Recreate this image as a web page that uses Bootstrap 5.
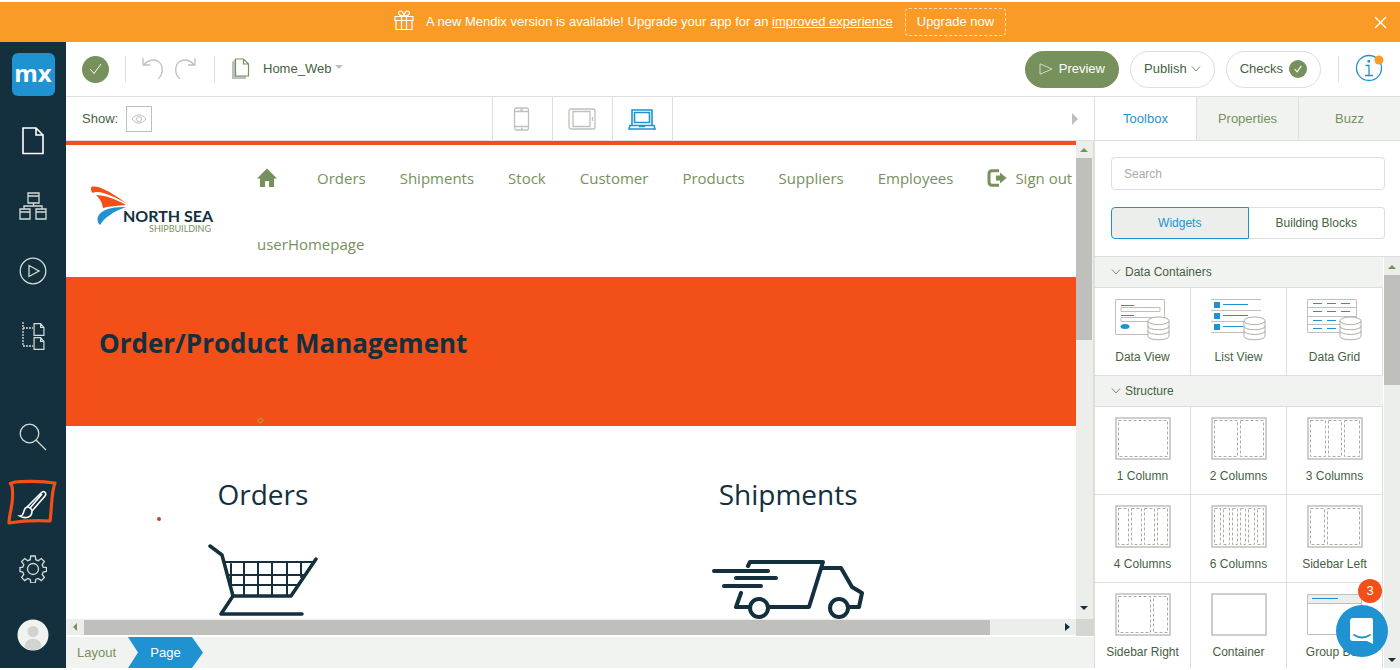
<!DOCTYPE html>
<html lang="en">
<head>
<meta charset="utf-8">
<meta name="viewport" content="width=device-width, initial-scale=1">
<title>Home_Web</title>
<link href="https://cdn.jsdelivr.net/npm/bootstrap@5.3.0/dist/css/bootstrap.min.css" rel="stylesheet">
<style>
:root{--navy:#142f3e;--blue:#1f93d1;--amber:#f99b26;--red:#f24f19;--green:#76915b;--ink:#465f42;--line:#dcdfda;--soft:#f1f3f0;--grey:#bfc0bb}
body{font-family:"Liberation Sans",Arial,sans-serif;font-size:13px;line-height:20px;color:var(--ink);background:#fff}
button{font:inherit;color:inherit;background:none;border:0;padding:0}
svg{display:block;flex:none}
.app{height:100vh;padding:2px 0}
.fill{flex:1 1 0;min-width:0;min-height:0}
.banner{background:var(--amber);height:40px;color:#fff}
.banner a{color:#fff}
.btn-upgrade{border:1px dashed #fde0b8;border-radius:4px;height:28px;padding:0 11px;margin-left:12px;color:#fff}
.btn-close-x{position:absolute;right:13px;top:14px}
.rail{width:66px;background:var(--navy)}
.rail button,.rail a{height:65px;width:66px;display:flex;align-items:center;justify-content:center}
.rail .low,.rail a{height:66px}
.rail a{padding-bottom:2px}
.mx-logo{width:43px;height:43px;border-radius:6px;background:var(--blue);color:#fff;font:700 24px/39px "Open Sans",sans-serif;text-align:center}
.topbar{height:55px;border-bottom:1px solid var(--line)}
.sep{width:1px;height:26px;background:var(--line)}
.actions{gap:11px}
.actions .sep{margin:0 5px 0 6px}
.pill{height:37px;border-radius:19px;border:1px solid var(--line);padding:0 13px;gap:6px}
.pill-main{background:var(--green);border-color:var(--green);color:#fff}
.dot-ok{border-radius:50%;background:var(--green);display:flex;align-items:center;justify-content:center}
.dot-ok.big{width:27px;height:27px}
.dot-ok.tiny{width:18px;height:18px}
.showbar{height:44px;border-bottom:1px solid var(--line)}
.eye{width:26px;height:26px;border:1px solid var(--grey)}
.devices{padding-right:60px}
.device{width:60px;border-left:1px solid var(--line);height:100%;display:flex;align-items:center;justify-content:center}
.device:last-child{border-right:1px solid var(--line);width:61px}
.view{border-top:4px solid var(--red);overflow:hidden;position:relative;font-family:"Open Sans",sans-serif}
.brandbox{width:191px;padding:39px 0 0 24px}
.nav-site{list-style:none;margin:0;padding:0;gap:0 34px;flex-wrap:wrap}
.nav-site a{color:var(--green);text-decoration:none;font-size:15px;line-height:66px;height:66px;display:flex;align-items:center;white-space:nowrap}
.hero{background:var(--red);height:149px;padding-left:33px}
.hero h1{font-size:26px;font-weight:700;line-height:36px;color:var(--navy);margin:0 0 18px}
.duo{margin-top:48px}
.duo section{display:flex;flex-direction:column;align-items:center;flex:none;width:39%}
.duo section+section{width:65%}
.duo h2{font-size:28px;line-height:40px;font-weight:400;color:var(--navy);margin:0 0 25px}
.mark-dot{position:absolute;width:4px;height:4px;border-radius:50%;background:#c04030;left:91px;top:372px}
.mark-gem{position:absolute;width:5px;height:5px;border:1px solid #b89a20;transform:rotate(45deg);left:192px;top:273px}
.vbar{width:18px;background:#ebeeea;border-right:1px solid var(--line)}
.vbar i{display:block;background:var(--grey);width:16px;flex:0 1 182px}
.hbar{height:18px;background:#ebeeea;border-bottom:2px solid #fff}
.hbar i{display:block;background:var(--grey);height:15px;flex:0 1 906px}
.corner{width:18px;background:#d4d7d1;height:17px}
.crumbs{height:31px;background:var(--soft)}
.crumbs a{color:var(--green);text-decoration:none;line-height:32px;height:31px}
.crumbs .first{width:62px;padding-left:11px}
.crumbs .now{background:var(--blue);color:#fff;width:75px;text-align:center;clip-path:polygon(0 0,64px 0,100% 50%,64px 100%,0 100%,10px 50%)}
.side{width:306px;border-left:1px solid var(--line)}
.tabs3{height:44px;border-bottom:1px solid var(--line)}
.tabs3 button{flex:1 1 0;background:var(--soft);color:var(--green);border-left:1px solid var(--line)}
.tabs3 .on{background:#fff;color:var(--blue);border-left:0}
.finder{padding:16px 15px 17px 16px;font-size:12px;border-bottom:1px solid var(--line)}
.finder input{width:100%;height:33px;border:1px solid var(--line);border-radius:4px;padding:0 12px;margin-bottom:17px;display:block;color:var(--ink)}
.finder input::placeholder{color:#a9aca6;opacity:1}
.finder .half{flex:1 1 0;height:32px;border:1px solid var(--line);border-radius:0 4px 4px 0;border-left:0}
.finder .half.on{border:1px solid var(--blue);border-radius:4px 0 0 4px;background:#ebeeea;color:var(--blue)}
.group{height:31px;background:var(--soft);font-size:12px;padding-left:16px;border-bottom:1px solid var(--line);width:100%}
.tiles{display:grid;grid-template-columns:repeat(3,1fr)}
.tiles button{height:88px;border-right:1px solid var(--line);border-bottom:1px solid var(--line);font-size:12px;line-height:16px;display:flex;flex-direction:column;align-items:center;padding-top:10px;gap:8px}
.pvbar{width:17px;background:#ebeeea;border-left:1px solid #fff}
.pvbar i{display:block;background:var(--grey);width:16px;height:110px}
.chat{position:absolute;right:12px;bottom:11px;width:52px;height:52px;border-radius:50%;background:var(--blue);display:flex;align-items:center;justify-content:center}
.count{position:absolute;right:6px;top:-26px;width:24px;height:24px;border-radius:50%;background:var(--red);color:#fff;line-height:24px;text-align:center}
.ln{fill:none;stroke:#bfc0bb}
.ds{fill:none;stroke:#a8aea2;stroke-dasharray:3 2}
.wt{fill:none;stroke:#d5dcd6;stroke-width:1.3}
.nv{fill:none;stroke:#142f3e;stroke-linecap:round;stroke-linejoin:round}
</style>
</head>
<body>
<svg width="0" height="0" class="position-absolute" aria-hidden="true">
<symbol id="drum" viewBox="0 0 24 26"><path d="M1 5v16c0 5 22 5 22 0V5" fill="#fff" stroke="#a8aca2"/><ellipse cx="12" cy="5" rx="11" ry="4" fill="#fff" stroke="#a8aca2"/><path fill="none" stroke="#a8aca2" d="M1 10.500c0 5 22 5 22 0M1 15.500c0 5 22 5 22 0"/></symbol>
<symbol id="leaf" viewBox="0 0 12 14"><path d="M.7.700h7l3.600 4v8.600H.7zM7.700.700v4h3.600" fill="none" stroke="#d5dcd6" stroke-width="1.300"/></symbol>
</svg>
<div class="app d-flex flex-column overflow-hidden">
  <div class="banner d-flex align-items-center justify-content-center position-relative flex-shrink-0">
    <svg width="20" height="21" viewBox="0 0 20 21" fill="none" stroke="#fff" stroke-width="1.200" class="me-2 mb-1"><path d="M1 6.500h18v4H1zM2 10.500v9h16v-9M7.500 6.500v13M12.500 6.500v13M10 6C3 6 4 1 6.500 1S10 6 10 6s1-5 3.500-5S17 6 10 6"/></svg>
    <span class="ms-1">A new Mendix version is available! Upgrade your app for an <a href="#">improved experience</a></span>
    <button type="button" class="btn-upgrade">Upgrade now</button>
    <button type="button" class="btn-close-x" aria-label="Close"><svg width="13" height="13" viewBox="0 0 13 13" stroke="#fff" stroke-width="1.300"><path d="M1 1l11 11M12 1L1 12"/></svg></button>
  </div>

  <div class="d-flex fill">
    <nav class="rail d-flex flex-column flex-shrink-0" aria-label="Main">
      <a href="#" class="text-decoration-none"><span class="mx-logo">mx</span></a>
      <button type="button" aria-label="Pages"><svg width="22" height="28" viewBox="0 0 22 28" fill="none" stroke="#fff" stroke-width="1.600"><path d="M1 1h13l7 7v18.500H1zM14 1v7h7"/></svg></button>
      <button type="button" aria-label="Domain model"><svg class="wt" width="28" height="28" viewBox="0 0 28 28"><path d="M9 1h11v10H9zM9 4h11M1 17h10v10H1zM1 20h10M17 17h10v10H17zM17 20h10M14.500 11v3M5 17v-3h18v3"/></svg></button>
      <button type="button" aria-label="Microflows"><svg class="wt" width="28" height="28" viewBox="0 0 28 28"><circle cx="14" cy="14" r="12.800"/><path d="M10 8.500v11l10-5.500z"/></svg></button>
      <button type="button" aria-label="Navigation"><svg width="24" height="28" viewBox="0 0 24 28"><path class="wt" stroke-dasharray="2 1" d="M2 0v24h10M2 6h10"/><use href="#leaf" x="12" y="1" width="12" height="13"/><use href="#leaf" x="12" y="15" width="12" height="13"/></svg></button>
      <button type="button" class="low mt-auto" aria-label="Search"><svg class="wt" width="28" height="28" viewBox="0 0 28 28"><circle cx="10.500" cy="10.500" r="9.300"/><path d="M17 17l10 10"/></svg></button>
      <button type="button" class="low" aria-label="Theme"><svg width="52" height="48" viewBox="0 0 52 48" fill="none"><path d="M4 4c2 5 2 12 1 20C4 32 2 38 2 44c6-1 20-3 41-2 2-13 1-28 5-38C34 2 16 2 8 3L2 5" stroke="#f24f19" stroke-width="3.200" stroke-linejoin="round"/><g stroke="#fff" stroke-width="1.600"><path d="M20 28L34 14c3-3 6 0 4 3L25 32M35 15L23 29"/><path d="M25 32c0 7-7 8-12 5 3 0 3-2 4-5 1-4 4-5 6-3 1 1 2 1 2 3z"/></g></svg></button>
      <button type="button" class="low" aria-label="Settings"><svg class="wt" width="28" height="28" viewBox="0 0 28 28"><circle cx="14" cy="14" r="5.500"/><path d="M11.800 1h4.400l.6 3.700 2.400 1 3.100-2.200 3.100 3.100-2.200 3.100 1 2.400 3.300.500v3.800l-3.300.600-1 2.400 2.200 3.100-3.100 3.100-3.100-2.200-2.400 1-.6 3.600h-4.400l-.6-3.600-2.400-1-3.100 2.200-3.100-3.100 2.200-3.100-1-2.400L1 16.400v-3.800l2.800-.5 1-2.400-2.200-3.100 3.100-3.100 3.100 2.200 2.400-1z"/></svg></button>
      <button type="button" class="low" aria-label="Account"><svg width="32" height="32" viewBox="0 0 32 32"><circle cx="16" cy="16" r="15.500" fill="#f1f3f0"/><circle cx="16" cy="12.500" r="5.500" fill="#d0d3ce"/><path d="M7.500 28c0-11 17-11 17 0-5 4-12 4-17 0z" fill="#d0d3ce"/></svg></button>
    </nav>

    <div class="fill d-flex flex-column">
      <header class="topbar d-flex align-items-center flex-shrink-0">
        <span class="dot-ok big ms-3"><svg width="13" height="12" viewBox="0 0 13 12" fill="none" stroke="#fff"><path d="M1 6l4 4.500L12 1"/></svg></span>
        <span class="sep mx-3"></span>
        <button type="button" aria-label="Undo"><svg width="22" height="24" viewBox="0 0 22 24" class="ln" stroke-width="1.300"><path d="M1 1v7h7M1.500 8C7 2 13 2 17 5s5 12-1 17"/></svg></button>
        <button type="button" class="ms-2 me-3" aria-label="Redo"><svg width="26" height="24" viewBox="0 0 22 24" class="ln" stroke-width="1.300"><path d="M21 1v7h-7M20.500 8C15 2 9 2 5 5s-5 12 1 17"/></svg></button>
        <span class="sep me-3"></span>
        <button type="button" class="d-flex align-items-center">
          <svg width="20" height="22" viewBox="0 0 20 22" class="me-1"><path d="M1 4l3-3v17h11v3H1z" fill="#bfc0bb"/><path d="M4.500 1h8l5 5v12h-13zM12.500 1v5h5" fill="#fff" stroke="#76915b" stroke-width="1.200"/></svg>
          <span class="ms-2">Home_Web</span>
          <svg width="8" height="4" viewBox="0 0 8 4" class="ms-1 mb-1"><path d="M0 0h8L4 4z" fill="#bfc0bb"/></svg>
        </button>
        <div class="actions d-flex align-items-center ms-auto">
          <button type="button" class="pill pill-main d-flex align-items-center"><svg width="14" height="12" viewBox="0 0 14 12" fill="none" stroke="#cfdac4"><path d="M1 .8v10.400L13 6z"/></svg><span>Preview</span></button>
          <button type="button" class="pill d-flex align-items-center gap-1"><span>Publish</span><svg width="10" height="6" viewBox="0 0 10 6" fill="none" stroke="#76915b"><path d="M1 .5l4 4.500L9 .5"/></svg></button>
          <button type="button" class="pill d-flex align-items-center"><span>Checks</span><span class="dot-ok tiny"><svg width="8" height="8" viewBox="0 0 13 12" fill="none" stroke="#fff" stroke-width="1.800"><path d="M1 6l4 4.500L12 1"/></svg></span></button>
          <span class="sep"></span>
          <button type="button" aria-label="Information" class="me-3"><svg width="29" height="30" viewBox="0 0 29 30"><circle cx="14" cy="14" r="12.500" fill="none" stroke="#1f93d1" stroke-width="1.300"/><path d="M10.500 11.500H14V21M10 21.500h8" fill="none" stroke="#1f93d1" stroke-width="1.300"/><path d="M12.500 6h2.500v2.500h-2.500z" fill="#1f93d1"/><circle cx="24" cy="6" r="4.500" fill="#f99b26"/></svg></button>
        </div>
      </header>

      <div class="d-flex fill">
        <main class="fill d-flex flex-column">
          <div class="showbar d-flex align-items-center flex-shrink-0">
            <span class="ms-3 me-2">Show:</span>
            <button type="button" class="eye d-flex align-items-center justify-content-center" aria-label="Visibility"><svg width="16" height="10" viewBox="0 0 16 10" class="ln"><path d="M1 5c4-5.500 10-5.500 14 0-4 5.500-10 5.500-14 0z"/><circle cx="8" cy="5" r="2.500"/></svg></button>
            <div class="devices d-flex h-100 mx-auto">
              <button type="button" class="device" aria-label="Phone"><svg width="18" height="24" viewBox="0 0 18 24" class="ln" stroke-width="1.300"><rect x="1.500" y="1" width="14" height="22" rx="2"/><path d="M1.500 4.500h14M1.500 19.500h14M7 2.800h3M8 21.500h1.500"/></svg></button>
              <button type="button" class="device" aria-label="Tablet"><svg width="28" height="22" viewBox="0 0 28 22" class="ln" stroke-width="1.300"><rect x="1" y="1" width="26" height="20" rx="2"/><path d="M5 3.500h17v15H5zM24.500 9v4"/></svg></button>
              <button type="button" class="device" aria-label="Desktop"><svg width="28" height="22" viewBox="0 0 28 22" fill="none" stroke="#1f93d1" stroke-width="1.600"><path d="M4 17V2h20v15M6.500 4.500h15v10h-15zM2 17.500h24l1 3.500H1zM11 18.500h6"/></svg></button>
            </div>
            <svg width="6" height="12" viewBox="0 0 6 12" class="me-3"><path d="M0 0l6 6-6 6z" fill="#bfc0bb"/></svg>
          </div>

          <div class="fill d-flex">
            <div class="view fill">
              <div class="d-flex">
                <div class="brandbox flex-shrink-0">
                  <svg width="124" height="52" viewBox="0 0 124 52" role="img" aria-label="North Sea Shipbuilding"><path d="M1 4c0-2 6-2 12 1 8 3 16 9 24 15C27 14 17 9 8 8c-3 0-4 0-5 1C1 8 1 6 1 4z" fill="#f24f19"/><path d="M6 11c8 0 20 4 30 10-9 1-16 1-23 3-1-6-3-9-7-13z" fill="#f24f19"/><path d="M10 41C4 35 8 22 36 23 24 27 14 34 10 41z" fill="#1f93d1"/><text x="33" y="38" font-family="Lato,sans-serif" font-weight="700" font-size="16" fill="#142f3e">NORTH SEA</text><text x="59" y="48" font-family="Lato,sans-serif" font-size="9" fill="#76915b">SHIPBUILDING</text></svg>
                </div>
                <ul class="nav-site d-flex fill">
                  <li><a href="#" aria-label="Home"><svg width="26" height="20" viewBox="0 0 26 20"><path d="M10 .5L0 10.500h3V19h5v-6h4v6h5v-8.500h3z" fill="#76915b"/></svg></a></li>
                  <li><a href="#">Orders</a></li>
                  <li><a href="#">Shipments</a></li>
                  <li><a href="#">Stock</a></li>
                  <li><a href="#">Customer</a></li>
                  <li><a href="#">Products</a></li>
                  <li><a href="#">Suppliers</a></li>
                  <li><a href="#">Employees</a></li>
                  <li><a href="#"><svg width="20" height="18" viewBox="0 0 20 18" class="me-2"><path d="M12 1.800H5C3 1.800 2 3 2 5v8c0 2 1 3.200 3 3.200h7" fill="none" stroke="#76915b" stroke-width="3"/><path d="M9 6.500h4V3.500l6.500 5.500-6.500 5.500v-3H9z" fill="#76915b"/></svg>Sign out</a></li>
                  <li><a href="#">userHomepage</a></li>
                </ul>
              </div>
              <div class="hero d-flex align-items-center"><h1>Order/Product Management</h1></div>
              <div class="duo d-flex">
                <section><h2>Orders</h2>
                  <svg width="112" height="80" viewBox="0 0 112 80" class="nv"><path d="M3 7l12 9 11 41h58l25-37M26 57L14 75h81" stroke-width="3.500"/><path d="M17 23h89M20 36h76M23 46h67M24 25v20M37 23v33M51 23v33M65 23v33M80 23v33M94 23v15" stroke-width="2"/></svg>
                </section>
                <section><h2>Shipments</h2>
                  <svg width="154" height="80" viewBox="0 0 154 80" class="nv" stroke-width="4"><path d="M37 27l2-4h73l-14 45H58M112 29h18l11 19 10 6-3 14h-10M30 54l-5 14h12M3 32h54M25 39h40M13 47h37"/><circle cx="48" cy="69" r="9"/><circle cx="128" cy="69" r="9"/></svg>
                </section>
              </div>
              <span class="mark-gem"></span><span class="mark-dot"></span>
            </div>
            <div class="vbar d-flex flex-column flex-shrink-0"><svg width="16" height="17" viewBox="0 0 16 17"><path d="M4 11h8L8 7z" fill="#76915b"/></svg><i></i><svg class="mt-auto" width="16" height="20" viewBox="0 0 16 20"><path d="M4 7h8l-4 4z" fill="#142f3e"/></svg></div>
          </div>
          <div class="d-flex flex-shrink-0">
            <div class="hbar fill d-flex align-items-center"><svg width="18" height="16" viewBox="0 0 18 16"><path d="M11 4v8L7 8z" fill="#76915b"/></svg><i></i><svg class="ms-auto" width="16" height="16" viewBox="0 0 16 16"><path d="M5 4v8l5-4z" fill="#142f3e"/></svg></div>
            <div class="corner"></div>
          </div>
          <nav class="crumbs d-flex flex-shrink-0" aria-label="Breadcrumb"><a href="#" class="first">Layout</a><a href="#" class="now">Page</a></nav>
        </main>

        <aside class="side d-flex flex-column flex-shrink-0 position-relative">
          <div class="tabs3 d-flex flex-shrink-0"><button type="button" class="on">Toolbox</button><button type="button">Properties</button><button type="button">Buzz</button></div>
          <div class="finder flex-shrink-0">
            <input type="search" placeholder="Search" aria-label="Search widgets">
            <div class="d-flex"><button type="button" class="half on">Widgets</button><button type="button" class="half">Building Blocks</button></div>
          </div>
          <div class="fill d-flex">
            <div class="fill overflow-hidden">
              <button type="button" class="group d-flex align-items-center"><svg width="10" height="6" viewBox="0 0 10 6" fill="none" stroke="#76915b" class="me-1"><path d="M1 .5l4 4.500L9 .5"/></svg>Data Containers</button>
              <div class="tiles">
                <button type="button"><svg width="56" height="43" viewBox="0 0 56 43"><path class="ln" d="M.5 1.500h49v35H.5zM6 9.500h39v4H6zM6 19.500h39v4H6z"/><path d="M6 7.500h13M6 17.500h13" stroke="#1f93d1"/><ellipse cx="10" cy="28.500" rx="4.500" ry="2.500" fill="#1f93d1"/><use href="#drum" x="32" y="18" width="23" height="25"/></svg>Data View</button>
                <button type="button"><svg width="56" height="43" viewBox="0 0 56 43"><path class="ln" d="M0 1.500h50M0 12.500h50M0 23.500h50M0 34.500h34"/><path d="M3 4h6v6H3zM3 15h6v6H3zM3 26h6v6H3z" fill="#1f93d1"/><path d="M12 6.500h25M12 17.500h25M12 28.500h20" stroke="#1f93d1"/><use href="#drum" x="32" y="18" width="23" height="25"/></svg>List View</button>
                <button type="button"><svg width="56" height="43" viewBox="0 0 56 43"><path class="ln" d="M.5 1.500h49v33H.5zM0 9.500h50M0 18.500h50M0 26.500h50"/><path d="M6 5.500h37M6 13.500h37M6 22.500h28M6 30.500h28" stroke="#1f93d1" stroke-dasharray="9 5"/><use href="#drum" x="32" y="18" width="23" height="25"/></svg>Data Grid</button>
              </div>
              <button type="button" class="group d-flex align-items-center"><svg width="10" height="6" viewBox="0 0 10 6" fill="none" stroke="#76915b" class="me-1"><path d="M1 .5l4 4.500L9 .5"/></svg>Structure</button>
              <div class="tiles">
                <button type="button"><svg width="56" height="43" viewBox="0 0 56 43"><path class="ln" stroke-width="1.500" d="M1 1h54v41H1z"/><path class="ds" d="M3.500 3.500h49v36h-49z"/></svg>1 Column</button>
                <button type="button"><svg width="56" height="43" viewBox="0 0 56 43"><path class="ln" stroke-width="1.500" d="M1 1h54v41H1z"/><path class="ds" d="M3.500 3.500h23v36h-23zM29.500 3.500h23v36h-23z"/></svg>2 Columns</button>
                <button type="button"><svg width="56" height="43" viewBox="0 0 56 43"><path class="ln" stroke-width="1.500" d="M1 1h54v41H1z"/><path class="ds" d="M3.500 3.500h15v36h-15zM21.500 3.500h13v36h-13zM37.500 3.500h15v36h-15z"/></svg>3 Columns</button>
                <button type="button"><svg width="56" height="43" viewBox="0 0 56 43"><path class="ln" stroke-width="1.500" d="M1 1h54v41H1z"/><path class="ds" d="M3.500 3.500h10v36h-10zM16.500 3.500h10v36h-10zM29.500 3.500h10v36h-10zM42.500 3.500h10v36h-10z"/></svg>4 Columns</button>
                <button type="button"><svg width="56" height="43" viewBox="0 0 56 43"><path class="ln" stroke-width="1.500" d="M1 1h54v41H1z"/><path class="ds" d="M3.500 3.500h6v36h-6zM12.500 3.500h6v36h-6zM21.500 3.500h5v36h-5zM29.500 3.500h5v36h-5zM37.500 3.500h6v36h-6zM46.500 3.500h6v36h-6z"/></svg>6 Columns</button>
                <button type="button"><svg width="56" height="43" viewBox="0 0 56 43"><path class="ln" stroke-width="1.500" d="M1 1h54v41H1z"/><path class="ds" d="M3.500 3.500h14v36h-14zM20.500 3.500h32v36h-32z"/></svg>Sidebar Left</button>
                <button type="button"><svg width="56" height="43" viewBox="0 0 56 43"><path class="ln" stroke-width="1.500" d="M1 1h54v41H1z"/><path class="ds" d="M3.500 3.500h32v36h-32zM38.500 3.500h14v36h-14z"/></svg>Sidebar Right</button>
                <button type="button"><svg width="56" height="43" viewBox="0 0 56 43"><path class="ln" stroke-width="1.500" d="M1 1h54v41H1z"/></svg>Container</button>
                <button type="button"><svg width="56" height="43" viewBox="0 0 56 43"><path class="ln" d="M.5 1.500h54v40H.5z"/><path d="M1 2h53v8H1z" fill="#ebeeea"/><path class="ln" d="M.5 10.500h54"/><path d="M5 5.500h26" stroke="#1f93d1"/></svg>Group Box</button>
              </div>
            </div>
            <div class="pvbar d-flex flex-column flex-shrink-0"><svg width="16" height="18" viewBox="0 0 16 18"><path d="M4 12h8L8 8z" fill="#76915b"/></svg><i></i><svg class="mt-auto" width="16" height="18" viewBox="0 0 16 18"><path d="M4 8h8l-4 4z" fill="#142f3e"/></svg></div>
          </div>
          <button type="button" class="chat" aria-label="Open chat, 3 unread"><svg width="26" height="28" viewBox="0 0 26 28"><path d="M4 1h18q2 0 2 2v24l-6-3H4q-3 0-3-3V4q0-3 3-3z" fill="#fff"/><path d="M5 18q8 5 16 0" fill="none" stroke="#1f93d1" stroke-width="1.800" stroke-linecap="round"/></svg><span class="count">3</span></button>
        </aside>
      </div>
    </div>
  </div>
</div>
<script src="https://cdn.jsdelivr.net/npm/bootstrap@5.3.0/dist/js/bootstrap.bundle.min.js"></script>
</body>
</html>
